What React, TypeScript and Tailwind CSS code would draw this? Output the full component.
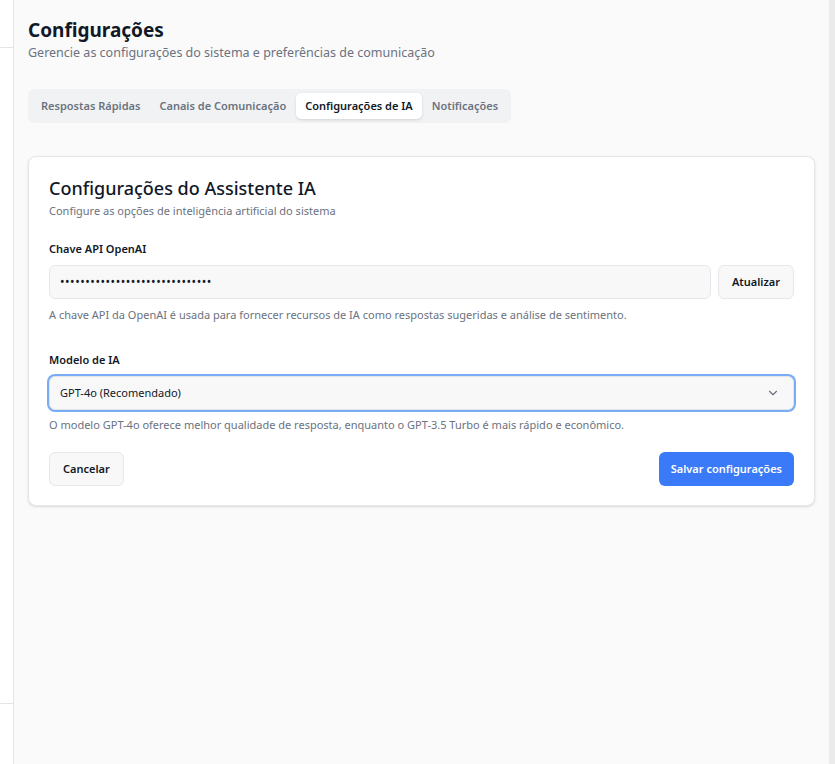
import { ChevronDown } from 'lucide-react'

const tabs = ['Respostas Rápidas', 'Canais de Comunicação', 'Configurações de IA', 'Notificações']

export default function App() {
    const active = 'Configurações de IA'

    return (
        <div className="flex h-[764px] w-full overflow-hidden text-[#111827]" style={{ fontFamily: '"Noto Sans", "Liberation Sans", sans-serif' }}>
            <aside className="flex w-[14px] shrink-0 flex-col border-r border-[#e5e5e5] bg-white">
                <div className="h-[48px] border-b border-[#e5e5e5]" />
                <div className="flex-1" />
                <div className="h-[61px] border-t border-[#e5e5e5]" />
            </aside>

            <main className="flex-1 bg-[#fafafa] px-[14px] pt-[16px]">
                <h1 className="text-[19px] font-bold leading-[28px]">Configurações</h1>
                <p className="text-[12.5px] leading-[18px] text-[#6b7280]">
                    Gerencie as configurações do sistema e preferências de comunicação
                </p>

                <div className="mt-[27px] inline-flex h-[34px] items-center gap-[1px] rounded-md bg-[#f1f2f4] px-[4px]">
                    {tabs.map(t => (
                        <button
                            key={t}
                            className={
                                t === active
                                    ? 'h-[26px] rounded-[5px] bg-white px-[9px] text-[11px] font-semibold text-[#111827] shadow-sm'
                                    : 'h-[26px] rounded-[5px] px-[9px] text-[11px] font-semibold text-[#6b7280]'
                            }
                        >
                            {t}
                        </button>
                    ))}
                </div>

                <section className="mt-[33px] rounded-lg border border-[#e5e7eb] bg-white px-[20px] pb-[19px] pt-[17px] shadow-sm">
                    <h2 className="text-[18px] font-medium leading-[28px]">Configurações do Assistente IA</h2>
                    <p className="mt-[1px] text-[11px] leading-[16px] text-[#6b7280]">
                        Configure as opções de inteligência artificial do sistema
                    </p>

                    <label className="mt-[22px] block text-[11px] font-semibold leading-[16px]">Chave API OpenAI</label>
                    <div className="mt-[8px] flex gap-[7px]">
                        <div className="flex h-[34px] flex-1 items-center rounded-md border border-[#e5e7eb] bg-[#f8f8f8] px-[10px] text-[12px] tracking-[0.55px]">
                            ••••••••••••••••••••••••••••••
                        </div>
                        <button className="h-[34px] rounded-md border border-[#e5e7eb] bg-[#f8f8f8] px-[13px] text-[11px] font-semibold">
                            Atualizar
                        </button>
                    </div>
                    <p className="mt-[8px] text-[11px] leading-[16px] text-[#6b7280]">
                        A chave API da OpenAI é usada para fornecer recursos de IA como respostas sugeridas e análise de sentimento.
                    </p>

                    <label className="mt-[29px] block text-[11px] font-semibold leading-[16px]">Modelo de IA</label>
                    <div className="mt-[8px] flex h-[34px] items-center justify-between rounded-md border border-[#e2e4e8] bg-[#f8f8f8] pl-[10px] pr-[13px] text-[11px] ring-2 ring-[#7aabf7]">
                        <span>GPT-4o (Recomendado)</span>
                        <ChevronDown className="h-[14px] w-[14px] text-[#6b7280]" />
                    </div>
                    <p className="mt-[7px] text-[11px] leading-[16px] text-[#6b7280]">
                        O modelo GPT-4o oferece melhor qualidade de resposta, enquanto o GPT-3.5 Turbo é mais rápido e econômico.
                    </p>

                    <div className="mt-[19px] flex items-center justify-between">
                        <button className="h-[34px] rounded-md border border-[#e5e7eb] bg-[#f8f8f8] px-[13px] text-[11px] font-semibold">
                            Cancelar
                        </button>
                        <button className="h-[34px] rounded-md bg-[#3a7af8] px-[12px] text-[11px] font-semibold text-white">
                            Salvar configurações
                        </button>
                    </div>
                </section>
            </main>

            <div className="w-[6px] shrink-0 bg-[#ebebeb]" />
        </div>
    )
}
